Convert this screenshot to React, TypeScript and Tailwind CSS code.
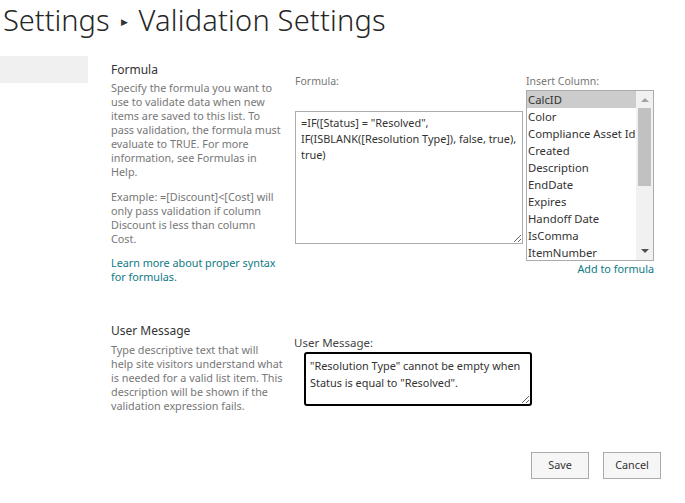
import React from 'react';

const columns = [
  'CalcID',
  'Color',
  'Compliance Asset Id',
  'Created',
  'Description',
  'EndDate',
  'Expires',
  'Handoff Date',
  'IsComma',
  'ItemNumber',
];

const font = { fontFamily: '"Noto Sans", "Open Sans", Arial, sans-serif' };

function Lines({ lines }: { lines: string[] }) {
  return (
    <>
      {lines.map((l) => (
        <span key={l} className="block whitespace-nowrap">
          {l}
        </span>
      ))}
    </>
  );
}

export default function App() {
  return (
    <div className="w-[685px] h-[503px] bg-white overflow-hidden" style={font}>
      <h1 className="pl-[3px] text-[29px] leading-[36px] font-light text-[#262626] flex items-center">
        <span>Settings</span>
        <span className="mx-[11px] text-[9px] text-[#333] mt-[4px]">▶</span>
        <span className="tracking-[0.2px]">Validation Settings</span>
      </h1>

      <div className="flex mt-[16px]">
        {/* left nav */}
        <div className="w-[88px] shrink-0">
          <div className="h-[27px] bg-[#f0f0f0]"></div>
        </div>

        <div className="flex-1">
          {/* formula section */}
          <div className="flex">
            <div className="w-[184px] pl-[23px] shrink-0">
              <h3 className="mt-[6px] text-[12px] leading-[16px] text-[#333]">Formula</h3>
              <p className="mt-[3px] text-[10.8px] leading-[14px] text-[#777]">
                <Lines
                  lines={[
                    'Specify the formula you want to',
                    'use to validate data when new',
                    'items are saved to this list. To',
                    'pass validation, the formula must',
                    'evaluate to TRUE. For more',
                    'information, see Formulas in',
                    'Help.',
                  ]}
                />
              </p>
              <p className="mt-[11px] text-[10.8px] leading-[14px] text-[#777]">
                <Lines
                  lines={[
                    'Example: =[Discount]<[Cost] will',
                    'only pass validation if column',
                    'Discount is less than column',
                    'Cost.',
                  ]}
                />
              </p>
              <p className="mt-[10px] text-[10.8px] leading-[14px] text-[#0e7a85]">
                <Lines lines={['Learn more about proper syntax', 'for formulas.']} />
              </p>
            </div>

            <div className="flex gap-[3px] pl-[23px]">
              <div className="w-[228px]">
                <label className="block mt-[18px] text-[10.5px] leading-[14px] text-[#777]">Formula:</label>
                <textarea
                  defaultValue={'=IF([Status] = "Resolved",\nIF(ISBLANK([Resolution Type]), false, true),\ntrue)'}
                  className="mt-[23px] w-[228px] h-[133px] border border-[#ababab] pl-[5px] pr-[2px] py-[3px] text-[10.9px] leading-[16px] text-[#333] resize-y outline-none"
                  style={font}
                />
              </div>
              <div className="w-[128px]">
                <label className="block mt-[18px] text-[10.5px] leading-[14px] text-[#777]">Insert Column:</label>
                <div className="mt-[2px] w-[128px] h-[171px] border border-[#ababab] bg-white flex">
                  <ul className="flex-1 min-w-0 text-[11.3px] leading-[17px] text-[#333]">
                    {columns.map((c, i) => (
                      <li
                        key={c}
                        className={'pl-[1px] whitespace-nowrap overflow-hidden ' + (i === 0 ? 'bg-[#cccccc]' : '')}
                      >
                        {c}
                      </li>
                    ))}
                  </ul>
                  <div className="w-[17px] shrink-0 bg-[#f1f1f1] flex flex-col items-center">
                    <div className="h-[17px] flex items-center justify-center">
                      <svg width="8" height="5" viewBox="0 0 8 5">
                        <path d="M0 5 L4 1 L8 5 Z" fill="#a3a3a3" />
                      </svg>
                    </div>
                    <div className="w-[13px] h-[78px] bg-[#c1c1c1]"></div>
                    <div className="flex-1"></div>
                    <div className="h-[17px] flex items-center justify-center">
                      <svg width="8" height="5" viewBox="0 0 8 5">
                        <path d="M0 0 L4 4 L8 0 Z" fill="#505050" />
                      </svg>
                    </div>
                  </div>
                </div>
                <div className="text-right mt-[1px] text-[10.8px] leading-[14px] text-[#0e7a85]">Add to formula</div>
              </div>
            </div>
          </div>

          {/* user message section */}
          <div className="flex mt-[39px]">
            <div className="w-[184px] pl-[23px] shrink-0">
              <h3 className="text-[12px] leading-[16px] text-[#333]">User Message</h3>
              <p className="mt-[4px] text-[10.8px] leading-[14px] text-[#777]">
                <Lines
                  lines={[
                    'Type descriptive text that will',
                    'help site visitors understand what',
                    'is needed for a valid list item. This',
                    'description will be shown if the',
                    'validation expression fails.',
                  ]}
                />
              </p>
            </div>
            <div className="pl-[22px]">
              <label className="block mt-[13px] text-[11.5px] leading-[14px] text-[#444]">User Message:</label>
              <textarea
                defaultValue={'"Resolution Type" cannot be empty when\nStatus is equal to "Resolved".'}
                className="block ml-[10px] mt-[2px] w-[228px] h-[54px] border-2 border-black rounded-[3px] pl-[4px] pr-[1px] py-[3px] text-[10.9px] leading-[17px] text-[#333] resize-y outline-none"
                style={font}
              />
            </div>
          </div>
        </div>
      </div>

      <div className="flex justify-end gap-[14px] pr-[24px] mt-[39px]">
        <button className="w-[58px] h-[27px] border border-[#ababab] bg-[#f6f6f6] text-[10.8px] text-[#333]">Save</button>
        <button className="w-[58px] h-[27px] border border-[#ababab] bg-[#f6f6f6] text-[10.8px] text-[#333]">Cancel</button>
      </div>
    </div>
  );
}
